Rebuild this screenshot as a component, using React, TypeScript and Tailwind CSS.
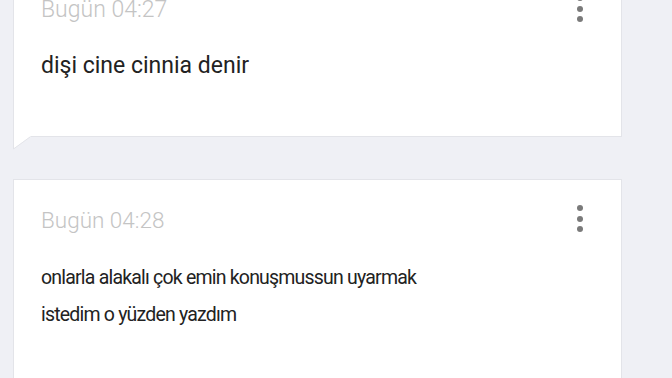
const Dots = () => (
  <div className="-mt-[3px] flex flex-col gap-[4.5px]">
    <span className="h-[6px] w-[6px] rounded-full bg-[#7a7a7a]" />
    <span className="h-[6px] w-[6px] rounded-full bg-[#7a7a7a]" />
    <span className="h-[6px] w-[6px] rounded-full bg-[#7a7a7a]" />
  </div>
);

const Message = ({
  time,
  text,
  last,
  timeClass,
  textClass,
}: {
  time: string;
  text: string;
  last?: boolean;
  timeClass: string;
  textClass: string;
}) => (
  <div className="w-[609px]">
    <div className="border border-[#e3e4e9] bg-white pl-[27px] pr-[38px] pt-[28px] pb-[52px]">
      <div className="flex items-start justify-between">
        <span className={`leading-6 font-light text-[#c4c4c4] ${timeClass}`}>{time}</span>
        <Dots />
      </div>
      <p className={`max-w-[400px] leading-[37px] text-[#222222] ${textClass}`}>{text}</p>
    </div>
    {!last && (
      <svg width="18" height="14" viewBox="0 0 18 14" className="-mt-px block">
        <polygon points="0,0 18,0 0,13" fill="#ffffff" />
        <line x1="0.5" y1="0" x2="0.5" y2="13" stroke="#e3e4e9" />
        <line x1="0.5" y1="13" x2="17" y2="1" stroke="#e3e4e9" />
      </svg>
    )}
  </div>
);

export default function App() {
  return (
    <div
      className="h-[378px] w-[672px] overflow-hidden bg-[#eff0f5] pl-[13px]"
      style={{ fontFamily: "Roboto, 'Noto Sans', sans-serif" }}
    >
      <div className="-mt-[31px] flex flex-col">
        <Message
          time="Bugün 04:27"
          text="dişi cine cinnia denir"
          timeClass="text-[23px]"
          textClass="mt-[25px] text-[23px]"
        />
        <div className="h-[29px]" />
        <Message
          time="Bugün 04:28"
          text="onlarla alakalı çok emin konuşmussun uyarmak istedim o yüzden yazdım"
          timeClass="text-[22.5px]"
          textClass="mt-[27px] text-[19.5px] tracking-[-0.8px]"
          last
        />
      </div>
    </div>
  );
}
